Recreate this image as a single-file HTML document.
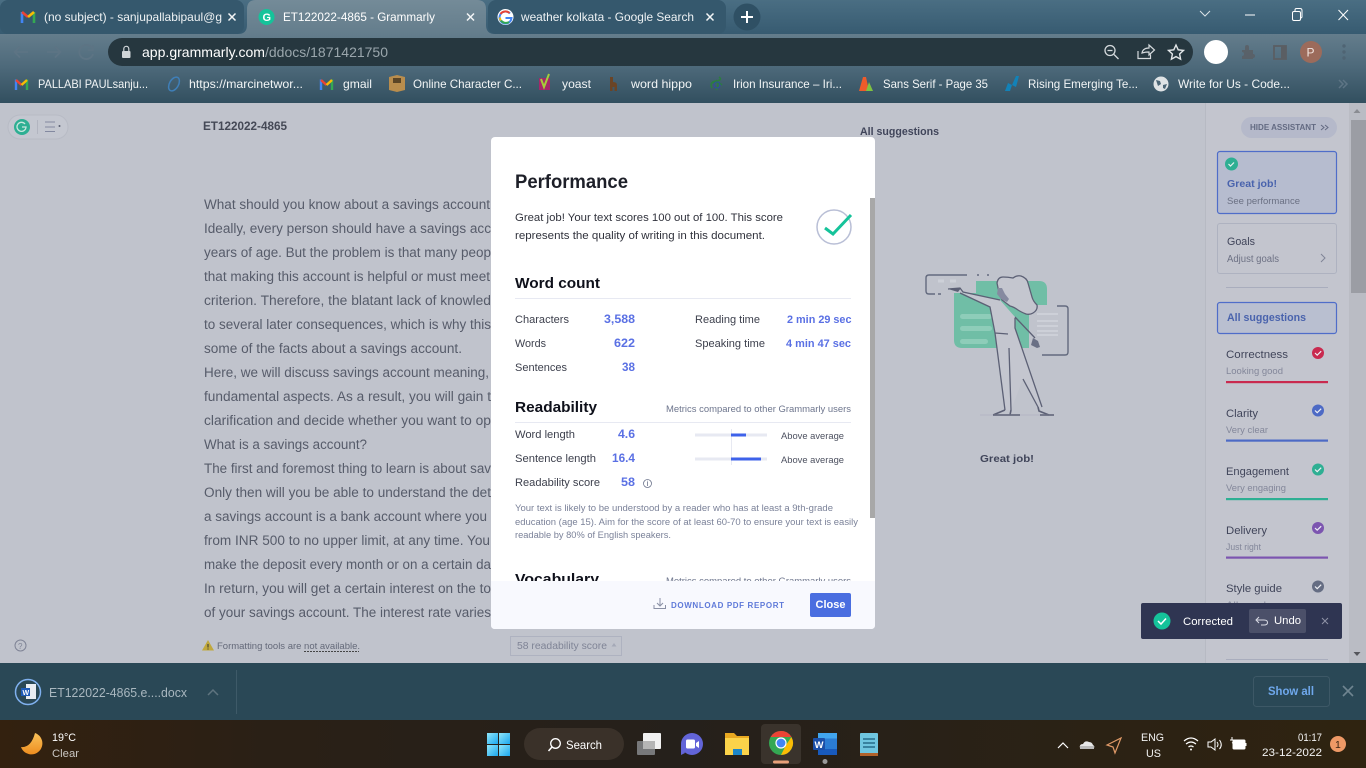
<!DOCTYPE html>
<html lang="en"><head><meta charset="utf-8"><title>ET122022-4865 - Grammarly</title>
<style>
html,body{margin:0;padding:0;width:1366px;height:768px;overflow:hidden;background:#c0c3cc}
svg{display:block;position:absolute;left:0;top:0}
text{font-family:"Liberation Sans",sans-serif;white-space:pre}
.b{font-weight:700}
</style></head><body>
<svg width="1366" height="768" viewBox="0 0 1366 768" xmlns="http://www.w3.org/2000/svg">
<defs>
<linearGradient id="strip" x1="0" y1="0" x2="0" y2="1"><stop offset="0" stop-color="#4a6e83"/><stop offset="1" stop-color="#375b71"/></linearGradient>
<linearGradient id="bar" gradientUnits="userSpaceOnUse" x1="0" y1="0" x2="0" y2="103"><stop offset="0" stop-color="#748b98"/><stop offset=".33" stop-color="#647d8c"/><stop offset=".64" stop-color="#4e6a7b"/><stop offset="1" stop-color="#324f5f"/></linearGradient>
<linearGradient id="task" x1="0" y1="0" x2="1" y2="0"><stop offset="0" stop-color="#33210f"/><stop offset=".2" stop-color="#2a2016"/><stop offset=".5" stop-color="#25201b"/><stop offset="1" stop-color="#2f2310"/></linearGradient>
<linearGradient id="moon" x1="0" y1="0" x2="0" y2="1"><stop offset="0" stop-color="#f9c25a"/><stop offset="1" stop-color="#ee8d1f"/></linearGradient>
<linearGradient id="win" x1="0" y1="0" x2="1" y2="1"><stop offset="0" stop-color="#8fe6fa"/><stop offset="1" stop-color="#1ba7ee"/></linearGradient>
<filter id="soft" x="0" y="0" width="100%" height="100%"><feGaussianBlur stdDeviation=".35"/></filter>
<clipPath id="mclip"><rect x="491" y="137" width="384" height="444"/></clipPath>
</defs>

<!-- tab strip -->
<rect width="1366" height="34" fill="url(#strip)"/>
<rect x="0" y="0" width="244" height="34" rx="8" fill="#35586d"/>
<rect x="488" y="0" width="238" height="34" rx="8" fill="#35586d"/>
<rect y="34" width="1366" height="69" fill="url(#bar)"/>
<path d="M238 34q9 0 9-9V9q0-9 9-9h221q9 0 9 9v16q0 9 9 9z" fill="url(#bar)"/>

<!-- gmail tab -->
<g fill="none" stroke-width="2.600"><path d="M22 23V12" stroke="#4285f4"/><path d="M34 23V12" stroke="#34a853"/><path d="M22 12l6 5" stroke="#ea4335"/><path d="M28 17l6-5" stroke="#f9bb05"/></g>
<text x="44" y="21" font-size="12" fill="#eef2f4" textLength="178" lengthAdjust="spacingAndGlyphs">(no subject) - sanjupallabipaul@g</text>
<path d="M228.500 13.500l7 7m0-7l-7 7" stroke="#f3f5f6" stroke-width="1.500"/>
<!-- grammarly tab -->
<circle cx="266.500" cy="17" r="8" fill="#15c39a"/><text x="262.500" y="21" font-size="11" fill="#fff" class="b">G</text>
<text x="283" y="21" font-size="12" fill="#fff" textLength="152" lengthAdjust="spacingAndGlyphs">ET122022-4865 - Grammarly</text>
<path d="M467 13.500l7 7m0-7l-7 7" stroke="#f3f5f6" stroke-width="1.500"/>
<!-- google tab -->
<circle cx="505.500" cy="17" r="8" fill="#fff"/>
<path d="M510 13.500a6 6 0 1 0 1.500 4.500h-6" fill="none" stroke="#4285f4" stroke-width="2"/>
<path d="M500.500 14a6 6 0 0 1 9-1" fill="none" stroke="#ea4335" stroke-width="2"/>
<path d="M500 17.500a6 6 0 0 0 .8 3" fill="none" stroke="#fbbc05" stroke-width="2"/>
<path d="M501 20.500a6 6 0 0 0 8 1.500" fill="none" stroke="#34a853" stroke-width="2"/>
<text x="521" y="21" font-size="12" fill="#eef2f4" textLength="173" lengthAdjust="spacingAndGlyphs">weather kolkata - Google Search</text>
<path d="M706.500 13.500l7 7m0-7l-7 7" stroke="#f3f5f6" stroke-width="1.500"/>
<!-- new tab -->
<circle cx="747" cy="17" r="13.500" fill="#2f5064"/>
<path d="M747 11v12m-6-6h12" stroke="#fff" stroke-width="2"/>
<!-- window controls -->
<path d="M1200 11l5 5 5-5" fill="none" stroke="#dbe3e7" stroke-width="1"/>
<path d="M1245 15h10" stroke="#fff" stroke-width="1"/>
<rect x="1292.500" y="11.500" width="8" height="9" rx="1.500" fill="none" stroke="#fff"/><path d="M1295 11v-1q0-1.500 1.500-1.500h3.500q2 0 2 2v6q0 1.500-1.500 1.500" fill="none" stroke="#fff"/>
<path d="M1338.500 10l9.500 10m0-10l-9.500 10" stroke="#fff" stroke-width="1"/>

<!-- toolbar -->
<path d="M28 52H15m5-5.500L14.500 52l5.500 5.500" fill="none" stroke="#5d7484" stroke-width="1.800"/>
<path d="M47 52h13m-5-5.500l5.500 5.500-5.500 5.500" fill="none" stroke="#5d7484" stroke-width="1.800"/>
<path d="M92 48a7 7 0 1 0 1 6M93 45v5h-5" fill="none" stroke="#5d7484" stroke-width="1.800"/>
<rect x="108" y="38" width="1085" height="28" rx="14" fill="#26373f"/>
<rect x="122" y="51" width="8.500" height="7" rx="1" fill="#d0d6d9"/><path d="M123.800 51v-2.200a2.500 2.500 0 0 1 5 0V51" fill="none" stroke="#d0d6d9" stroke-width="1.200"/>
<text x="142" y="57" font-size="14" fill="#fff" textLength="123" lengthAdjust="spacingAndGlyphs">app.grammarly.com</text>
<text x="265" y="57" font-size="14" fill="#9aa6ac" textLength="123" lengthAdjust="spacingAndGlyphs">/ddocs/1871421750</text>
<circle cx="1110" cy="50.500" r="5" fill="none" stroke="#d5dadd" stroke-width="1.300"/><path d="M1114 54.500l4.500 4.500M1107.500 50.500h5" stroke="#d5dadd" stroke-width="1.300"/>
<path d="M1138 51v7.500h12.500v-4M1142 53q1-5 7-5v-3l5.500 5-5.500 5v-3q-4 0-7 1z" fill="none" stroke="#d5dadd" stroke-width="1.200"/>
<path d="M1176 45l2.200 4.800 5.300.6-3.900 3.600 1 5.200-4.600-2.600-4.600 2.600 1-5.200-3.900-3.600 5.300-.6z" fill="none" stroke="#e3e7e9" stroke-width="1.400"/>
<circle cx="1216" cy="52" r="12" fill="#fff"/>
<path d="M1242 50h3v-3a2 2 0 0 1 4 0v3h4v4a2 2 0 0 1 0 4v1h-11v-3a2 2 0 0 0 0-4z" fill="#5a5e63" opacity=".8"/>
<rect x="1274" y="46" width="12" height="13" fill="none" stroke="#5a5e63" stroke-width="1.800"/><rect x="1281" y="46" width="5" height="13" fill="#5a5e63"/>
<circle cx="1311" cy="52" r="11" fill="#9c6b5b"/><text x="1306.500" y="56.500" font-size="12" fill="#f2e4de">P</text>
<g fill="#4f6473"><circle cx="1344" cy="46" r="1.700"/><circle cx="1344" cy="52" r="1.700"/><circle cx="1344" cy="58" r="1.700"/></g>

<!-- bookmarks -->
<g fill="none" stroke-width="2.400"><path d="M16 90V79.500" stroke="#4285f4"/><path d="M27 90V79.500" stroke="#34a853"/><path d="M16 80l5.500 5" stroke="#ea4335"/><path d="M21.500 85l5.500-5" stroke="#f9bb05"/></g>
<text x="38" y="88" font-size="12" fill="#f2f5f6" textLength="110" lengthAdjust="spacingAndGlyphs">PALLABI PAULsanju...</text>
<ellipse cx="174" cy="84" rx="4.500" ry="7.500" transform="rotate(30 174 84)" fill="none" stroke="#3f7fb8" stroke-width="1.500"/>
<text x="189" y="88" font-size="12" fill="#f2f5f6" textLength="114" lengthAdjust="spacingAndGlyphs">https://marcinetwor...</text>
<g fill="none" stroke-width="2.400"><path d="M321 90V79.500" stroke="#4285f4"/><path d="M332 90V79.500" stroke="#34a853"/><path d="M321 80l5.500 5" stroke="#ea4335"/><path d="M326.500 85l5.500-5" stroke="#f9bb05"/></g>
<text x="343" y="88" font-size="12" fill="#f2f5f6" textLength="29" lengthAdjust="spacingAndGlyphs">gmail</text>
<path d="M389 77l8-2 8 2v13l-8 2-8-2z" fill="#b98d4d"/><path d="M393 78h8v5h-8z" fill="#5b4526"/>
<text x="413" y="88" font-size="12" fill="#f2f5f6" textLength="109" lengthAdjust="spacingAndGlyphs">Online Character C...</text>
<rect x="539" y="78" width="11" height="12" fill="#a4286a"/><path d="M541 79l3 8 5-13" fill="none" stroke="#a6ce39" stroke-width="2"/>
<text x="562" y="88" font-size="12" fill="#f2f5f6" textLength="29" lengthAdjust="spacingAndGlyphs">yoast</text>
<path d="M610 77h3v5q4 0 4 3v6h-2.500v-4h-2v4H610z" fill="#6a4426"/>
<text x="631" y="88" font-size="12" fill="#f2f5f6" textLength="61" lengthAdjust="spacingAndGlyphs">word hippo</text>
<path d="M712 88q-3-6 4-7t3-4M716 90q4-6 0-10M712 83q6-2 10 2" fill="none" stroke="#2b7e3e" stroke-width="1.500"/><circle cx="717" cy="85" r="3" fill="none" stroke="#2d4fa0"/>
<text x="733" y="88" font-size="12" fill="#f2f5f6" textLength="109" lengthAdjust="spacingAndGlyphs">Irion Insurance – Iri...</text>
<path d="M859 91l4-14h3l3 14z" fill="#ee5b2a"/><path d="M866 91l3-9 4 9z" fill="#7fc241"/>
<text x="883" y="88" font-size="12" fill="#f2f5f6" textLength="105" lengthAdjust="spacingAndGlyphs">Sans Serif - Page 35</text>
<path d="M1005 91l3-8 4 2 4-9h3l-3 11-4-2-2 6z" fill="#1282b8"/>
<text x="1028" y="88" font-size="12" fill="#f2f5f6" textLength="110" lengthAdjust="spacingAndGlyphs">Rising Emerging Te...</text>
<circle cx="1161" cy="84" r="7.500" fill="#dfe3e5"/><path d="M1156 80l4 1 1 3-3 2zM1163 85l4-1-2 5-2-1z" fill="#4b6575"/>
<text x="1178" y="88" font-size="12" fill="#f2f5f6" textLength="112" lengthAdjust="spacingAndGlyphs">Write for Us - Code...</text>
<path d="M1339 80l4 4-4 4m4-8l4 4-4 4" fill="none" stroke="#5e7585" stroke-width="1.500"/>

<!-- dimmed app -->
<g filter="url(#soft)">
<rect y="103" width="1366" height="560" fill="#c0c3cc"/>
<rect x="1205" y="103" width="144" height="560" fill="#c3c5ce"/>
<path d="M1205.500 103v560" stroke="#b7bac3"/>
<rect x="1349" y="103" width="17" height="560" fill="#babcc4"/>
<rect x="1351" y="120" width="15" height="173" fill="#9b9da4"/>
<path d="M1357 109l-3.500 4h7z" fill="#8a8c92"/><path d="M1357 656l-3.500-4h7z" fill="#55575c"/>

<rect x="8" y="115" width="60" height="24" rx="12" fill="#c4c7d0" stroke="#b8bbc5"/>
<circle cx="22" cy="127" r="8" fill="#2eaf93"/><path d="M25 124a4.500 4.500 0 1 0 1 3h-4" fill="none" stroke="#c9e6de" stroke-width="1.300"/>
<path d="M37.500 120v14" stroke="#b2b5c0"/><path d="M45 122h10M45 127h10M45 131.500h10" stroke="#8389a0"/><circle cx="59.500" cy="126" r="1" fill="#585d70"/>
<text x="203" y="130" font-size="11.500" class="b" fill="#444856" textLength="84" lengthAdjust="spacingAndGlyphs">ET122022-4865</text>

<g font-size="13.500" fill="#575b6a">
<text x="204" y="209" textLength="286" lengthAdjust="spacingAndGlyphs">What should you know about a savings account</text>
<text x="204" y="233" textLength="287" lengthAdjust="spacingAndGlyphs">Ideally, every person should have a savings acc</text>
<text x="204" y="257" textLength="287" lengthAdjust="spacingAndGlyphs">years of age. But the problem is that many peop</text>
<text x="204" y="281" textLength="286" lengthAdjust="spacingAndGlyphs">that making this account is helpful or must meet</text>
<text x="204" y="305" textLength="287" lengthAdjust="spacingAndGlyphs">criterion. Therefore, the blatant lack of knowled</text>
<text x="204" y="329" textLength="287" lengthAdjust="spacingAndGlyphs">to several later consequences, which is why this</text>
<text x="204" y="353" textLength="258" lengthAdjust="spacingAndGlyphs">some of the facts about a savings account.</text>
<text x="204" y="377" textLength="285" lengthAdjust="spacingAndGlyphs">Here, we will discuss savings account meaning,</text>
<text x="204" y="401" textLength="287" lengthAdjust="spacingAndGlyphs">fundamental aspects. As a result, you will gain t</text>
<text x="204" y="425" textLength="287" lengthAdjust="spacingAndGlyphs">clarification and decide whether you want to op</text>
<text x="204" y="449" textLength="163" lengthAdjust="spacingAndGlyphs">What is a savings account?</text>
<text x="204" y="473" textLength="287" lengthAdjust="spacingAndGlyphs">The first and foremost thing to learn is about sav</text>
<text x="204" y="497" textLength="287" lengthAdjust="spacingAndGlyphs">Only then will you be able to understand the det</text>
<text x="204" y="521" textLength="283" lengthAdjust="spacingAndGlyphs">a savings account is a bank account where you</text>
<text x="204" y="545" textLength="286" lengthAdjust="spacingAndGlyphs">from INR 500 to no upper limit, at any time. You</text>
<text x="204" y="569" textLength="287" lengthAdjust="spacingAndGlyphs">make the deposit every month or on a certain da</text>
<text x="204" y="593" textLength="287" lengthAdjust="spacingAndGlyphs">In return, you will get a certain interest on the to</text>
<text x="204" y="617" textLength="287" lengthAdjust="spacingAndGlyphs">of your savings account. The interest rate varies</text>
</g>

<circle cx="20.500" cy="645.500" r="5.500" fill="none" stroke="#7f8496"/><text x="18" y="649" font-size="8" fill="#7f8496">?</text>
<path d="M208 640l6 10.500h-12z" fill="#c0a83c"/><path d="M208 644v3.500m0 1v1" stroke="#333" stroke-width="1"/>
<text x="217" y="649" font-size="9.500" fill="#646979" textLength="143" lengthAdjust="spacingAndGlyphs">Formatting tools are not available.</text>
<path d="M304 651.500h55" stroke="#444" stroke-dasharray="2 1"/>
<rect x="510.500" y="636.500" width="111" height="19" fill="none" stroke="#aeb2c0"/>
<text x="517" y="649" font-size="10" fill="#7f8496" textLength="90" lengthAdjust="spacingAndGlyphs">58 readability score</text><path d="M614 643l-2.500 3.500h5z" fill="#a5a9b7"/>

<!-- right-side empty state -->
<text x="860" y="135" font-size="11" class="b" fill="#41455a" textLength="79" lengthAdjust="spacingAndGlyphs">All suggestions</text>
<path d="M976 281h63q8 0 8 8v16h-18v43h-67q-8 0-8-8v-47h22z" fill="#6fbea6"/>
<g fill="#8ecdb9"><rect x="960" y="314" width="32" height="5" rx="2.500"/><rect x="960" y="326" width="32" height="5" rx="2.500"/><rect x="960" y="339" width="28" height="5" rx="2.500"/></g>
<g stroke="#cdd0d8" stroke-width="2"><path d="M1037 314h21M1037 321h21M1037 326h21M1037 331h21M1037 335h21"/></g>
<path d="M938 281h6M950 281h6" stroke="#cdd0d8" stroke-width="3"/>
<path d="M967 275h-38q-3 0-3 3v13q0 3 3 3h6M938 294h3M977 275h2M987 275h2" fill="none" stroke="#646a7e" stroke-width="1.400"/>
<path d="M1057 306h8q3 0 3 3v43q0 3-3 3h-23" fill="none" stroke="#646a7e" stroke-width="1.400"/>
<path d="M960 292l40 8 15 17v11l27 79h-4l-15-28-12 31h-6l-10-77-5-26z" fill="#c4c6cf"/>
<path d="M997 283q1-6 6-6 5 0 10 1 4-3 8-2 6 2 7 7l4 14q1 4 5 8 1 5-4 8-3 2-7 1-5-2-8-4-4-3-8-4l-8-6q-3-6-5-17z" fill="#c4c6cf" stroke="#5c6175" stroke-width="1.300"/>
<path d="M998 288l-1 6 4 5 6 3 2-3-4-5-3-6z" fill="#868aa0"/>
<g fill="none" stroke="#5c6175" stroke-width="1.300">
<path d="M948 289l12-1 3 4 37 8M960 293l30 14 5 26 10 77M1015 318v10l27 79M1015 317l20 21M1009 348l2 62M1023 379l15 28M995 333l13 1"/>
<path d="M1005 410l-12 5M1011 410l-1 5M1038 407l1 4 10 4" stroke-width="1.600"/>
</g>
<path d="M948 289l13-1-3 4z" fill="#5c6175"/><path d="M1033 338l5 3 2 6-3 1-6-3z" fill="#6b7085"/>
<path d="M980 415h73" stroke="#b8bac6" stroke-width="1.500"/><path d="M993 415h27M1040 415h14" stroke="#5c6175" stroke-width="1.500"/>
<text x="980" y="462" font-size="10.500" class="b" fill="#41455a" textLength="54" lengthAdjust="spacingAndGlyphs">Great job!</text>

<!-- assistant -->
<rect x="1241" y="117" width="96" height="21" rx="10.500" fill="#b5b9ca"/>
<text x="1250" y="130" font-size="8" class="b" fill="#636a82" textLength="66" lengthAdjust="spacingAndGlyphs">HIDE ASSISTANT</text>
<path d="M1321 125l3 2.500-3 2.500m4-5l3 2.500-3 2.500" fill="none" stroke="#636a82"/>
<rect x="1217.500" y="151.500" width="119" height="62" rx="2.500" fill="#b6bccf" stroke="#4f6dc9" stroke-width="1.200"/>
<circle cx="1231.500" cy="164" r="6.500" fill="#2eaf93"/><path d="M1228.500 164l2 2 3.500-3.500" fill="none" stroke="#e8f3f0" stroke-width="1.200"/>
<text x="1227" y="187" font-size="10.500" class="b" fill="#4a63ad" textLength="50" lengthAdjust="spacingAndGlyphs">Great job!</text>
<text x="1227" y="204" font-size="9.500" fill="#6b7083" textLength="73" lengthAdjust="spacingAndGlyphs">See performance</text>
<rect x="1217.500" y="223.500" width="119" height="50" rx="2.500" fill="none" stroke="#aeb2c0"/>
<text x="1227" y="245" font-size="11" fill="#41455a" textLength="28" lengthAdjust="spacingAndGlyphs">Goals</text>
<text x="1227" y="262" font-size="10" fill="#6d7184" textLength="52" lengthAdjust="spacingAndGlyphs">Adjust goals</text>
<path d="M1321 254l4 4-4 4" fill="none" stroke="#7f8496"/>
<path d="M1226 287.500h102" stroke="#a9adbd"/>
<rect x="1217.500" y="302.500" width="119" height="31" rx="2.500" fill="#b9bfd0" stroke="#4f6dc9" stroke-width="1.200"/>
<text x="1227" y="321" font-size="11" class="b" fill="#4a63ad" textLength="79" lengthAdjust="spacingAndGlyphs">All suggestions</text>

<g font-size="11" fill="#41455a">
<text x="1226" y="358" textLength="62" lengthAdjust="spacingAndGlyphs">Correctness</text>
<text x="1226" y="417" textLength="32" lengthAdjust="spacingAndGlyphs">Clarity</text>
<text x="1226" y="475" textLength="63" lengthAdjust="spacingAndGlyphs">Engagement</text>
<text x="1226" y="534" textLength="41" lengthAdjust="spacingAndGlyphs">Delivery</text>
<text x="1226" y="592" textLength="56" lengthAdjust="spacingAndGlyphs">Style guide</text>
</g>
<g font-size="9.500" fill="#83879a">
<text x="1226" y="374" textLength="57" lengthAdjust="spacingAndGlyphs">Looking good</text>
<text x="1226" y="433" textLength="42" lengthAdjust="spacingAndGlyphs">Very clear</text>
<text x="1226" y="491" textLength="60" lengthAdjust="spacingAndGlyphs">Very engaging</text>
<text x="1226" y="550" textLength="35" lengthAdjust="spacingAndGlyphs">Just right</text>
<text x="1226" y="608" textLength="40" lengthAdjust="spacingAndGlyphs">All good</text>
</g>
<circle cx="1318" cy="353" r="6" fill="#c9294f"/><rect x="1226" y="381" width="102" height="2.200" fill="#c9294f"/>
<circle cx="1318" cy="410.500" r="6" fill="#4e6bc5"/><rect x="1226" y="439.500" width="102" height="2.200" fill="#4e6bc5"/>
<circle cx="1318" cy="469.500" r="6" fill="#2eaf93"/><rect x="1226" y="498" width="102" height="2.200" fill="#2eaf93"/>
<circle cx="1318" cy="528" r="6" fill="#7c54b0"/><rect x="1226" y="556.500" width="102" height="2.200" fill="#7c54b0"/>
<circle cx="1318" cy="586.500" r="6" fill="#656d83"/>
<g fill="none" stroke="#eef0f5" stroke-width="1.200"><path d="M1315 353l2.200 2.200 4-4"/><path d="M1315 410.500l2.200 2.200 4-4"/><path d="M1315 469.500l2.200 2.200 4-4"/><path d="M1315 528l2.200 2.200 4-4"/><path d="M1315 586.500l2.200 2.200 4-4"/></g>
<path d="M1226 659.500h102" stroke="#a9adbd"/>
</g>

<!-- toast -->
<rect x="1141" y="603" width="201" height="36" rx="2" fill="#2f3552"/>
<circle cx="1162" cy="621" r="8.500" fill="#15c39a"/><path d="M1158 621l3 3 5-5.500" fill="none" stroke="#fff" stroke-width="1.500"/>
<text x="1183" y="625" font-size="11" fill="#fff" textLength="50" lengthAdjust="spacingAndGlyphs">Corrected</text>
<rect x="1249" y="609" width="57" height="24" rx="2" fill="#4b5069"/>
<path d="M1259 617l-3 3 3 3m-3-3h8q3.500 0 3.500 2.500t-3.500 2.500h-3" fill="none" stroke="#d8dae4"/>
<text x="1274" y="624" font-size="11" fill="#fff" textLength="27" lengthAdjust="spacingAndGlyphs">Undo</text>
<path d="M1322 618l6 6m0-6l-6 6" stroke="#8e92a6"/>

<!-- modal -->
<rect x="491" y="137" width="384" height="492" rx="4" fill="#fff"/>
<g clip-path="url(#mclip)">
<text x="515" y="188" font-size="19" class="b" fill="#1d1f28" textLength="113" lengthAdjust="spacingAndGlyphs">Performance</text>
<g font-size="11" fill="#30323c">
<text x="515" y="221" textLength="268" lengthAdjust="spacingAndGlyphs">Great job! Your text scores 100 out of 100. This score</text>
<text x="515" y="239" textLength="250" lengthAdjust="spacingAndGlyphs">represents the quality of writing in this document.</text>
</g>
<circle cx="834" cy="227" r="17" fill="none" stroke="#b9bfd6" stroke-width="1.500"/>
<path d="M825 228l8 6 18-19" fill="none" stroke="#15c39a" stroke-width="3"/>
<text x="515" y="288" font-size="15" class="b" fill="#0e101a" textLength="85" lengthAdjust="spacingAndGlyphs">Word count</text>
<path d="M515 298.500h336" stroke="#e7e9f2"/>
<g font-size="11" fill="#3d404d">
<text x="515" y="323" textLength="54" lengthAdjust="spacingAndGlyphs">Characters</text>
<text x="515" y="347" textLength="31" lengthAdjust="spacingAndGlyphs">Words</text>
<text x="515" y="371" textLength="52" lengthAdjust="spacingAndGlyphs">Sentences</text>
<text x="695" y="323" textLength="65" lengthAdjust="spacingAndGlyphs">Reading time</text>
<text x="695" y="347" textLength="70" lengthAdjust="spacingAndGlyphs">Speaking time</text>
<text x="515" y="438" textLength="60" lengthAdjust="spacingAndGlyphs">Word length</text>
<text x="515" y="462" textLength="81" lengthAdjust="spacingAndGlyphs">Sentence length</text>
<text x="515" y="486" textLength="85" lengthAdjust="spacingAndGlyphs">Readability score</text>
</g>
<g font-size="12" class="b" fill="#5a70e4">
<text x="604" y="323" textLength="31" lengthAdjust="spacingAndGlyphs">3,588</text>
<text x="614" y="347" textLength="21" lengthAdjust="spacingAndGlyphs">622</text>
<text x="622" y="371" textLength="13" lengthAdjust="spacingAndGlyphs">38</text>
<text x="618" y="438" textLength="17" lengthAdjust="spacingAndGlyphs">4.6</text>
<text x="612" y="462" textLength="23" lengthAdjust="spacingAndGlyphs">16.4</text>
<text x="621" y="486" textLength="14" lengthAdjust="spacingAndGlyphs">58</text>
</g>
<g font-size="11" class="b" fill="#5a70e4">
<text x="787" y="323" textLength="64.500" lengthAdjust="spacingAndGlyphs">2 min 29 sec</text>
<text x="786" y="347" textLength="65" lengthAdjust="spacingAndGlyphs">4 min 47 sec</text>
</g>
<text x="515" y="412" font-size="15" class="b" fill="#0e101a" textLength="82" lengthAdjust="spacingAndGlyphs">Readability</text>
<text x="666" y="412" font-size="9.500" fill="#6d758d" textLength="185" lengthAdjust="spacingAndGlyphs">Metrics compared to other Grammarly users</text>
<path d="M515 422.500h336" stroke="#e7e9f2"/>
<circle cx="647.500" cy="483.500" r="4" fill="none" stroke="#6d758d" stroke-width=".8"/><path d="M647.500 482v4m0-5.200v.8" stroke="#6d758d" stroke-width=".8"/>
<rect x="695" y="433.500" width="72" height="3" fill="#e7e9f2"/><rect x="695" y="457.500" width="72" height="3" fill="#e7e9f2"/>
<path d="M731.500 429v36" stroke="#e7e9f2"/>
<rect x="731" y="433.500" width="15" height="3" fill="#3e62ea"/><rect x="731" y="457.500" width="30" height="3" fill="#3e62ea"/>
<g font-size="9" fill="#4d5160">
<text x="781" y="439" textLength="63" lengthAdjust="spacingAndGlyphs">Above average</text>
<text x="781" y="463" textLength="63" lengthAdjust="spacingAndGlyphs">Above average</text>
</g>
<g font-size="9" fill="#7b8299">
<text x="515" y="511" textLength="318" lengthAdjust="spacingAndGlyphs">Your text is likely to be understood by a reader who has at least a 9th-grade</text>
<text x="515" y="525" textLength="343" lengthAdjust="spacingAndGlyphs">education (age 15). Aim for the score of at least 60-70 to ensure your text is easily</text>
<text x="515" y="538" textLength="156" lengthAdjust="spacingAndGlyphs">readable by 80% of English speakers.</text>
</g>
<text x="515" y="584" font-size="15" class="b" fill="#0e101a" textLength="84" lengthAdjust="spacingAndGlyphs">Vocabulary</text>
<text x="666" y="584" font-size="9.500" fill="#6d758d" textLength="185" lengthAdjust="spacingAndGlyphs">Metrics compared to other Grammarly users</text>
</g>
<rect x="870" y="198" width="5" height="320" fill="#a8a8a8"/>
<path d="M491 581h384v44q0 4-4 4H495q-4 0-4-4z" fill="#f8f9fe"/>
<path d="M654 605v3.500h11.500V605M660 598v8m-3-3l3 3 3-3" fill="none" stroke="#8a90a5"/>
<text x="671" y="608" font-size="8" class="b" fill="#5f7ad9" textLength="113" lengthAdjust="spacing">DOWNLOAD PDF REPORT</text>
<rect x="810" y="593" width="41" height="24" rx="2" fill="#4a6ee0"/>
<text x="815.500" y="608" font-size="11" class="b" fill="#fff" textLength="30" lengthAdjust="spacingAndGlyphs">Close</text>

<!-- download bar -->
<rect y="663" width="1366" height="57" fill="#2a4856"/>
<circle cx="28" cy="692" r="12.500" fill="#2a4856" stroke="#7fb0ee" stroke-width="1.500"/>
<rect x="26" y="684" width="10" height="15" fill="#e9edf2"/><rect x="21" y="688" width="9" height="8" fill="#1e5bb8"/><text x="22.500" y="695" font-size="7" class="b" fill="#fff">W</text>
<text x="49" y="697" font-size="12.500" fill="#a9b7bf" textLength="138" lengthAdjust="spacingAndGlyphs">ET122022-4865.e....docx</text>
<path d="M208 695l5-5 5 5" fill="none" stroke="#5f747f" stroke-width="1.500"/>
<path d="M236.500 670v44" stroke="#3e5a68"/>
<rect x="1253.500" y="676.500" width="76" height="30" rx="3" fill="none" stroke="#3d5866"/>
<text x="1268" y="695" font-size="12" class="b" fill="#6fa8ec" textLength="46" lengthAdjust="spacingAndGlyphs">Show all</text>
<path d="M1343 686l10 10m0-10l-10 10" stroke="#6f8590" stroke-width="1.600"/>

<!-- taskbar -->
<rect y="720" width="1366" height="48" fill="url(#task)"/>
<path d="M35 733a11 11 0 1 1-14 14q10 1 14-14z" fill="url(#moon)"/>
<text x="52" y="741" font-size="11" fill="#fff" textLength="24" lengthAdjust="spacingAndGlyphs">19°C</text>
<text x="52" y="757" font-size="11" fill="#c9c6c2" textLength="27" lengthAdjust="spacingAndGlyphs">Clear</text>
<g fill="url(#win)"><rect x="487" y="733" width="11" height="11"/><rect x="499" y="733" width="11" height="11"/><rect x="487" y="745" width="11" height="11"/><rect x="499" y="745" width="11" height="11"/></g>
<rect x="524" y="728" width="100" height="32" rx="16" fill="#3a3129"/>
<circle cx="555.500" cy="743.500" r="4.800" fill="none" stroke="#fff" stroke-width="1.300"/><path d="M552 747l-3.500 4" stroke="#fff" stroke-width="1.500"/>
<text x="566" y="749" font-size="12" fill="#fff" textLength="36" lengthAdjust="spacingAndGlyphs">Search</text>
<rect x="637" y="741" width="18" height="14" rx="1" fill="#77787a"/><rect x="643" y="733" width="18" height="16" rx="1" fill="#f1f1f1"/><rect x="643" y="741" width="12" height="8" fill="#b5b5b5"/>
<circle cx="692" cy="744" r="11" fill="#6264d8"/><path d="M681 744v11l4-2z" fill="#6264d8"/><rect x="686" y="739.500" width="9" height="9" rx="1.500" fill="#fff"/><path d="M696 743l3-2v7l-3-2z" fill="#fff"/>
<path d="M725 733h9l3 3h12v19h-24z" fill="#e8a821"/><rect x="725" y="738" width="24" height="17" fill="#fbd34a"/><rect x="733" y="749" width="9" height="6" fill="#1c86c8"/>
<rect x="761" y="724" width="40" height="40" rx="4" fill="#3a332c"/>
<circle cx="781" cy="743" r="12" fill="#34a853"/>
<path d="M781 743V731a12 12 0 0 1 10.400 6h-10.400z" fill="#ea4335"/><path d="M770.600 737a12 12 0 0 1 20.800 0H781z" fill="#ea4335"/>
<path d="M791.400 737A12 12 0 0 1 781 755l5-10z" fill="#fbbc05"/>
<circle cx="781" cy="743" r="5.600" fill="#fff"/><circle cx="781" cy="743" r="4.400" fill="#4285f4"/>
<rect x="773" y="760.500" width="16" height="3" rx="1.500" fill="#e8a07a"/>
<rect x="818" y="733" width="19" height="22" rx="1.500" fill="#2b7cd3"/><rect x="818" y="733" width="19" height="5.500" fill="#41a5ee"/><rect x="818" y="749" width="19" height="6" fill="#185abd"/>
<rect x="813" y="738" width="12" height="12" rx="1" fill="#1b4fa8"/><text x="814.500" y="748" font-size="9.500" class="b" fill="#fff">W</text>
<circle cx="825" cy="761.500" r="2.500" fill="#9a9a9a"/>
<rect x="860" y="733" width="18" height="23" rx="1" fill="#6fc6e0"/><rect x="860" y="753" width="18" height="3" fill="#b0622b"/>
<path d="M863 739h12M863 743h12M863 747h12" stroke="#276d8a" stroke-width="1.400"/>
<path d="M1058 748l5-5 5 5" fill="none" stroke="#fff" stroke-width="1.200"/>
<path d="M1080 748q-1-4 3-4 2-4 6-2 3 0 4 3 2 1 1 3z" fill="#e8e8e8"/><rect x="1080" y="746" width="14" height="3" fill="#bbb"/>
<path d="M1107 745l14-7-6 15-2-6z" fill="none" stroke="#e09a68" stroke-width="1.200"/>
<text x="1141" y="741" font-size="11" fill="#f2f2f2" textLength="23" lengthAdjust="spacingAndGlyphs">ENG</text>
<text x="1146" y="757" font-size="11" fill="#f2f2f2" textLength="15" lengthAdjust="spacingAndGlyphs">US</text>
<g fill="none" stroke="#fff" stroke-width="1.200"><path d="M1184 741q7-6 14 0M1186 744q5-4 10 0M1188.500 747q2.500-2 5 0"/></g><circle cx="1191" cy="749.500" r="1" fill="#fff"/>
<path d="M1208 742h3l4-3v11l-4-3h-3z" fill="none" stroke="#fff"/><path d="M1217 742q2 2.500 0 5M1219.500 740q3.500 5 0 9" fill="none" stroke="#fff"/>
<rect x="1233" y="740" width="12" height="9" rx="1" fill="#fff" stroke="#fff"/><rect x="1245" y="743" width="1.500" height="3" fill="#fff"/><path d="M1232 737v3m-2 0h4v2l-2 1" fill="none" stroke="#fff"/>
<text x="1298" y="741" font-size="11" fill="#f4f4f4" textLength="24" lengthAdjust="spacingAndGlyphs">01:17</text>
<text x="1262" y="756" font-size="11" fill="#f4f4f4" textLength="60" lengthAdjust="spacingAndGlyphs">23-12-2022</text>
<circle cx="1338" cy="744" r="8" fill="#ee9966"/><text x="1335" y="748" font-size="10.500" fill="#3a2414">1</text>
</svg>
</body></html>
